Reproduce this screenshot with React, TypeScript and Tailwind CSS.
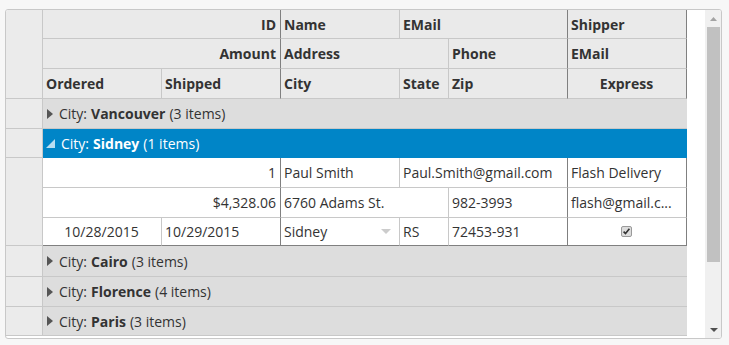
import type { ReactNode } from 'react'

const LIGHT = 'border-[#c8c8c8]'

type CellProps = {
  children?: ReactNode
  span?: string
  align?: 'left' | 'right' | 'center'
  dark?: boolean
  noRight?: boolean
  bottomDark?: boolean
  bold?: boolean
  bg?: string
}

function Cell({ children, span = '', align = 'left', dark, noRight, bottomDark, bold, bg = '' }: CellProps) {
  const justify = align === 'right' ? 'justify-end' : align === 'center' ? 'justify-center' : 'justify-start'
  return (
    <div
      className={[
        'flex items-center overflow-hidden whitespace-nowrap pl-[3px] pr-[4px] border-b',
        noRight ? '' : 'border-r',
        LIGHT,
        dark ? 'border-r-[#808080]' : '',
        bottomDark ? 'border-b-[#808080]' : '',
        bold ? 'font-bold' : '',
        justify,
        span,
        bg,
      ].join(' ')}
    >
      {children}
    </div>
  )
}

function GroupRow({ city, count, open }: { city: string; count: number; open?: boolean }) {
  return (
    <>
      <div className="border-b border-r border-[#c8c8c8] bg-[#ebebeb]" />
      {open ? (
        <div className="col-span-6 flex items-center bg-[#0085c7] pl-[3px] text-white">
          <svg width="10" height="10" viewBox="0 0 10 10" className="mr-[5px] mt-[1px]">
            <polygon points="9,0 9,9 0,9" fill="#b9def2" />
          </svg>
          <span>City: </span>
          <span className="ml-[4px] font-bold">{city}</span>
          <span className="ml-[4px]">({count} items)</span>
        </div>
      ) : (
        <div className="col-span-6 flex items-center border-b border-[#c8c8c8] bg-[#dddddd] pl-[4px]">
          <svg width="6" height="10" viewBox="0 0 6 10" className="mr-[6px]">
            <polygon points="0,0 6,5 0,10" fill="#555555" />
          </svg>
          <span>City: </span>
          <span className="ml-[4px] font-bold">{city}</span>
          <span className="ml-[4px]">({count} items)</span>
        </div>
      )}
    </>
  )
}

function Scrollbar() {
  return (
    <div className="flex w-[16px] flex-col bg-[#f0f0f0]">
      <div className="flex h-[17px] items-center justify-center pl-[1px]">
        <svg width="7" height="4" viewBox="0 0 7 4">
          <polygon points="3.5,0 7,4 0,4" fill="#a3a3a3" />
        </svg>
      </div>
      <div className="ml-[2px] h-[235px] w-[13px] bg-[#c1c1c1]" />
      <div className="flex-1" />
      <div className="flex h-[17px] items-center justify-center pl-[1px]">
        <svg width="8" height="4" viewBox="0 0 8 4">
          <polygon points="0,0 8,0 4,4" fill="#505050" />
        </svg>
      </div>
    </div>
  )
}

export default function App() {
  return (
    <div
      className="min-h-screen bg-[#f7f7f7] pl-[5px] pt-[9px] text-[14px] text-[#333333]"
      style={{ fontFamily: '"Open Sans", "Noto Sans", sans-serif' }}
    >
      <div className="flex h-[330px] w-[717px] overflow-hidden rounded-[3px] border border-[#c8c8c8] bg-white">
        <div className="flex h-full flex-1">
          <div className="grid h-[326px] grid-cols-[37px_119px_119px_119px_49px_119px_119px] grid-rows-[29px_30px_30px_30px_29px_30px_30px_28px_31px_30px_29px]">
            {/* header */}
            <div className="row-span-3 border-b border-r border-[#c8c8c8] bg-[#ebebeb]" />
            <Cell span="col-span-2" align="right" dark bold bg="bg-[#eaeaea]">ID</Cell>
            <Cell bold bg="bg-[#eaeaea]">Name</Cell>
            <Cell span="col-span-2" dark bold bg="bg-[#eaeaea]">EMail</Cell>
            <Cell dark bold bg="bg-[#eaeaea]">Shipper</Cell>

            <Cell span="col-span-2" align="right" dark bold bg="bg-[#eaeaea]">Amount</Cell>
            <Cell span="col-span-2" bold bg="bg-[#eaeaea]">Address</Cell>
            <Cell dark bold bg="bg-[#eaeaea]">Phone</Cell>
            <Cell dark bold bg="bg-[#eaeaea]">EMail</Cell>

            <Cell bold bg="bg-[#eaeaea]">Ordered</Cell>
            <Cell dark bold bg="bg-[#eaeaea]">Shipped</Cell>
            <Cell bold bg="bg-[#eaeaea]">City</Cell>
            <Cell bold bg="bg-[#eaeaea]">State</Cell>
            <Cell dark bold bg="bg-[#eaeaea]">Zip</Cell>
            <Cell align="center" dark bold bg="bg-[#eaeaea]">Express</Cell>

            <GroupRow city="Vancouver" count={3} />
            <GroupRow city="Sidney" count={1} open />

            {/* Sidney item */}
            <div className="row-span-3 border-b border-r border-[#c8c8c8] bg-[#ebebeb]" />
            <Cell span="col-span-2" align="right" dark>1</Cell>
            <Cell>Paul Smith</Cell>
            <Cell span="col-span-2" dark>Paul.Smith@gmail.com</Cell>
            <Cell dark>Flash Delivery</Cell>

            <Cell span="col-span-2" align="right" dark>$4,328.06</Cell>
            <Cell span="col-span-2">6760 Adams St.</Cell>
            <Cell dark>982-3993</Cell>
            <Cell dark>flash@gmail.c...</Cell>

            <Cell align="center" bottomDark>10/28/2015</Cell>
            <Cell dark bottomDark>10/29/2015</Cell>
            <Cell bottomDark>
              <span className="flex-1">Sidney</span>
              <svg width="10" height="5" viewBox="0 0 10 5" className="mr-[4px]">
                <polygon points="0,0 10,0 5,5" fill="#cccccc" />
              </svg>
            </Cell>
            <Cell bottomDark>RS</Cell>
            <Cell dark bottomDark>72453-931</Cell>
            <Cell align="center" dark bottomDark>
              <svg width="11" height="11" viewBox="0 0 11 11">
                <rect x="0.5" y="0.5" width="10" height="10" rx="1.5" fill="#dcdcdc" stroke="#9a9a9a" />
                <path d="M2.6 5.6 L4.5 7.6 L8.4 2.8" fill="none" stroke="#333333" strokeWidth="1.6" />
              </svg>
            </Cell>

            <GroupRow city="Cairo" count={3} />
            <GroupRow city="Florence" count={4} />
            <GroupRow city="Paris" count={3} />
          </div>
          <div className="flex-1 bg-white" />
        </div>
        <Scrollbar />
      </div>
    </div>
  )
}
